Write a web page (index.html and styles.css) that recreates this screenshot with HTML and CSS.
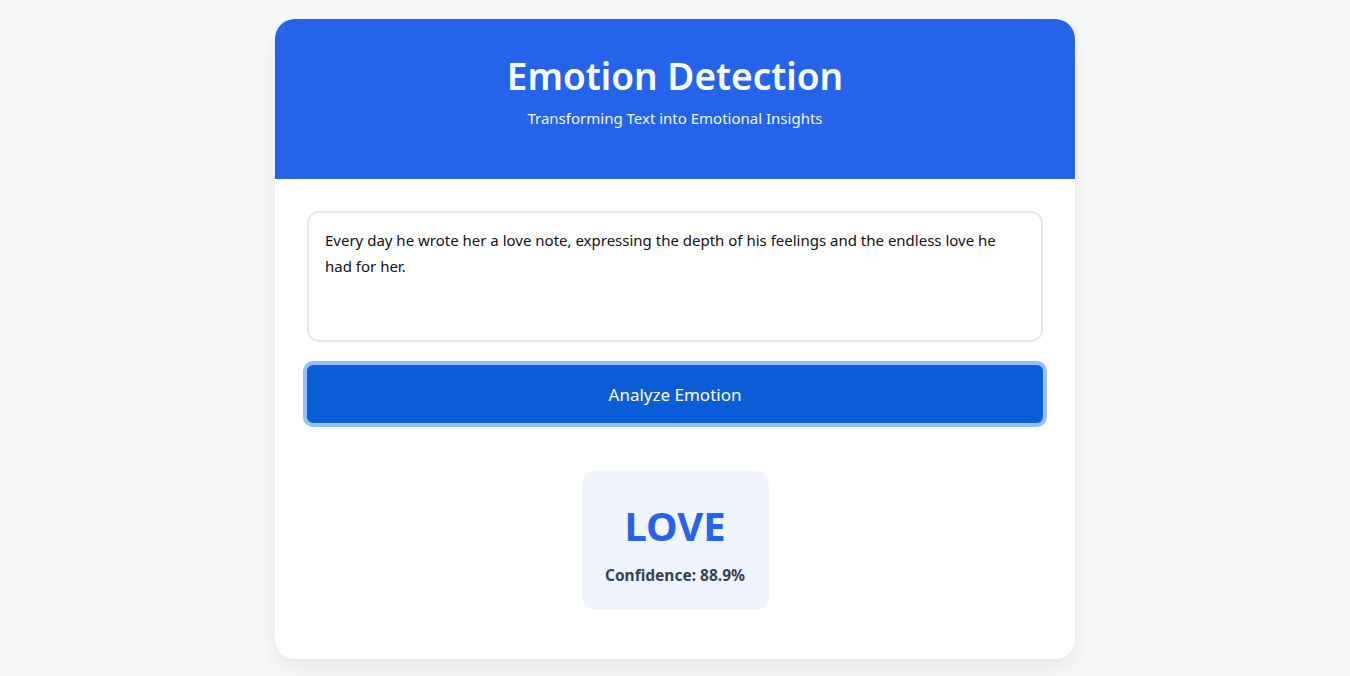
FILE: index.html
```html
<!DOCTYPE html>
<html lang="en">
<head>
<meta charset="utf-8">
<title>Emotion Detection</title>
<link rel="stylesheet" href="styles.css">
</head>
<body>
<main class="card">
  <header class="card-header">
    <h1 class="title">Emotion Detection</h1>
    <p class="subtitle">Transforming Text into Emotional Insights</p>
  </header>
  <section class="card-body">
    <textarea class="text-input">Every day he wrote her a love note, expressing the depth of his feelings and the endless love he had for her.</textarea>
    <button class="analyze-btn" type="button">Analyze Emotion</button>
    <div class="result-wrap">
      <div class="result">
        <div class="result-emotion">LOVE</div>
        <div class="result-confidence">Confidence: 88.9%</div>
      </div>
    </div>
  </section>
</main>
</body>
</html>
```

FILE: styles.css
```css
* { box-sizing: border-box; }
html, body { margin: 0; padding: 0; }
body {
  background: #f8f9fb;
  font-family: "Noto Sans", "Open Sans", sans-serif;
  min-height: 676px;
  padding-top: 19px;
}
.card {
  width: 800px;
  margin: 0 auto;
  background: #ffffff;
  border-radius: 20px;
  overflow: hidden;
  box-shadow: 0 10px 25px rgba(0, 0, 0, 0.08);
}
.card-header {
  background: #2563eb;
  color: #ffffff;
  height: 160px;
  text-align: center;
  padding-top: 32px;
}
.title {
  margin: 0;
  font-size: 37px;
  font-weight: 600;
  line-height: 50px;
}
.subtitle {
  margin: 7px 0 0;
  font-size: 15px;
  line-height: 20px;
  opacity: 0.95;
}
.card-body {
  padding: 32px 32px 49px;
  display: flex;
  flex-direction: column;
}
.text-input {
  display: block;
  width: 736px;
  height: 131px;
  border: 2px solid #e5e7eb;
  border-radius: 12px;
  padding: 14px 16px 16px;
  font-family: inherit;
  font-size: 15px;
  line-height: 26px;
  color: #111111;
  resize: none;
  outline: none;
}
.analyze-btn {
  margin-top: 23px;
  height: 58px;
  width: 736px;
  border: none;
  border-radius: 6px;
  background: #0b5ed7;
  color: #ffffff;
  font-family: inherit;
  font-size: 17px;
  box-shadow: 0 0 0 4px #98c0f8;
}
.result-wrap {
  margin-top: 48px;
  display: flex;
  justify-content: center;
}
.result {
  width: 187px;
  height: 139px;
  background: #eff4ff;
  border-radius: 14px;
  text-align: center;
  padding-top: 30px;
}
.result-emotion {
  font-size: 40px;
  font-weight: 700;
  color: #2563eb;
  line-height: 50px;
}
.result-confidence {
  margin-top: 14px;
  font-size: 15.5px;
  font-weight: 700;
  color: #374151;
  line-height: 20px;
}
```
